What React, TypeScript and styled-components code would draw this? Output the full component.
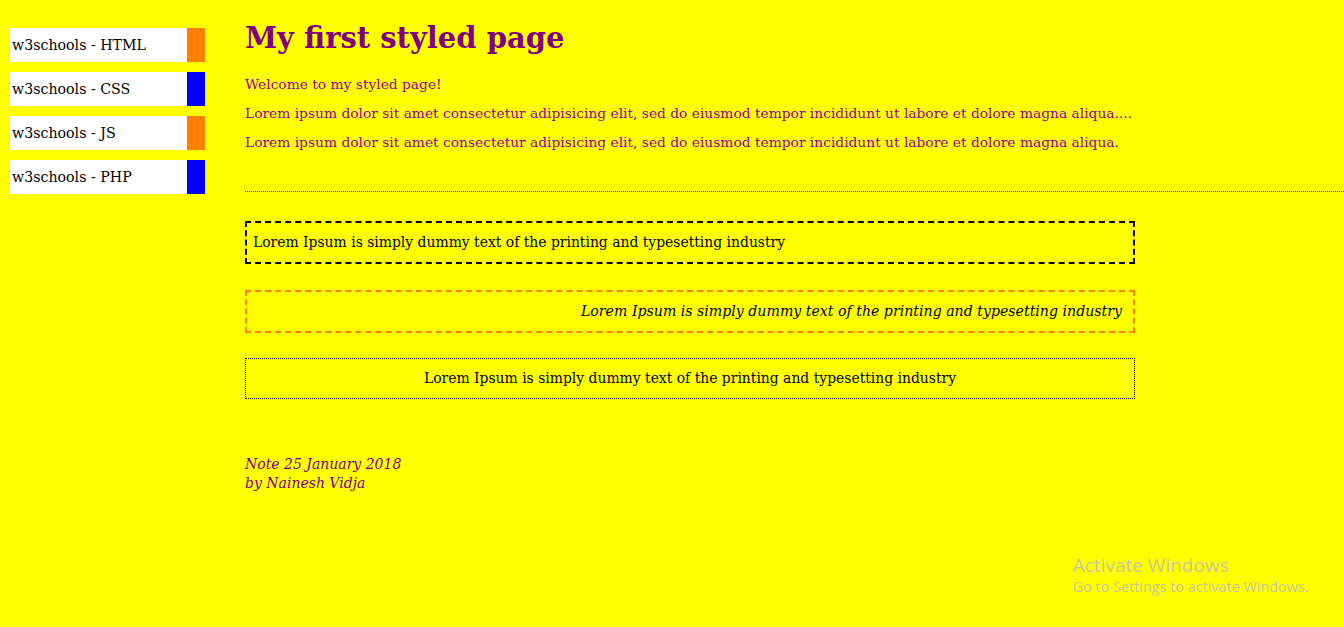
import React from 'react';
import styled, { createGlobalStyle } from 'styled-components';

const GlobalStyle = createGlobalStyle`
  html, body {
    margin: 0;
    padding: 0;
    background: #ffff00;
  }
  body {
    font-family: 'DejaVu Serif', Georgia, serif;
    color: #800080;
  }
`;

const links = [
  { label: 'w3schools - HTML', accent: '#ff8000' },
  { label: 'w3schools - CSS', accent: '#0000ff' },
  { label: 'w3schools - JS', accent: '#ff8000' },
  { label: 'w3schools - PHP', accent: '#0000ff' },
];

const boxes = [
  { variant: 'dashed' as const },
  { variant: 'italic' as const },
  { variant: 'dotted' as const },
];

const App: React.FC = () => {
  return (
    <>
      <GlobalStyle />
      <StyledPage>
        <StyledNav>
          {links.map((l) => (
            <StyledNavItem key={l.label} accent={l.accent}>
              {l.label}
            </StyledNavItem>
          ))}
        </StyledNav>
        <StyledMain>
          <StyledTitle>My first styled page</StyledTitle>
          <StyledPara>Welcome to my styled page!</StyledPara>
          <StyledPara>
            Lorem ipsum dolor sit amet consectetur adipisicing elit, sed do eiusmod tempor incididunt ut labore et dolore magna aliqua....
          </StyledPara>
          <StyledPara>
            Lorem ipsum dolor sit amet consectetur adipisicing elit, sed do eiusmod tempor incididunt ut labore et dolore magna aliqua.
          </StyledPara>
          <StyledRule />
          {boxes.map((b) => (
            <StyledBox key={b.variant} variant={b.variant}>
              Lorem Ipsum is simply dummy text of the printing and typesetting industry
            </StyledBox>
          ))}
          <StyledNote>
            Note 25 January 2018
            <br />
            by Nainesh Vidja
          </StyledNote>
        </StyledMain>
      </StyledPage>
      <StyledWatermark>
        <StyledWatermarkTitle>Activate Windows</StyledWatermarkTitle>
        <StyledWatermarkSub>Go to Settings to activate Windows.</StyledWatermarkSub>
      </StyledWatermark>
    </>
  );
};

const StyledPage = styled.div`
  display: flex;
  align-items: flex-start;
  min-height: 627px;
  width: 1344px;
  overflow: hidden;
`;

const StyledNav = styled.ul`
  list-style: none;
  margin: 28px 0 0 10px;
  padding: 0;
  width: 195px;
  flex-shrink: 0;
  display: flex;
  flex-direction: column;
  gap: 10px;
`;

const StyledNavItem = styled.li<{ accent: string }>`
  height: 34px;
  line-height: 34px;
  background: #ffffff;
  border-right: 18px solid ${(props) => props.accent};
  padding-left: 2px;
  color: #000000;
  font-size: 14.2px;
`;

const StyledMain = styled.main`
  margin-left: 40px;
  flex: 1;
  min-width: 0;
`;

const StyledTitle = styled.h1`
  margin: 18px 0 0 0;
  font-size: 29px;
  line-height: 40px;
  font-weight: 700;
  color: #800080;
`;

const StyledPara = styled.p`
  margin: 10px 0 0 0;
  font-size: 13.8px;
  line-height: 19px;
  color: #990099;

  &:first-of-type {
    margin-top: 17px;
  }
`;

const StyledRule = styled.hr`
  margin: 39px 0 29px 0;
  border: none;
  border-top: 1px dotted #800080;
  height: 0;
`;

const StyledBox = styled.div<{ variant: 'dashed' | 'italic' | 'dotted' }>`
  width: 890px;
  box-sizing: border-box;
  margin-bottom: ${(props) => (props.variant === 'dashed' ? '26px' : '25px')};
  color: #000000;
  font-size: ${(props) => (props.variant === 'italic' ? '14.15px' : '13.92px')};
  line-height: 19px;
  padding: ${(props) => (props.variant === 'dotted' ? '10px 6px' : '10px 11px 10px 6px')};
  border: ${(props) =>
    props.variant === 'dashed'
      ? '2px dashed #000000'
      : props.variant === 'italic'
      ? '2px dashed #ff8000'
      : '1px dotted #000080'};
  font-style: ${(props) => (props.variant === 'italic' ? 'italic' : 'normal')};
  text-align: ${(props) =>
    props.variant === 'italic' ? 'right' : props.variant === 'dotted' ? 'center' : 'left'};
`;

const StyledNote = styled.p`
  margin: 56px 0 0 0;
  font-size: 14px;
  line-height: 19px;
  font-style: italic;
  color: #800080;
`;

const StyledWatermark = styled.div`
  position: fixed;
  left: 1073px;
  top: 553px;
  font-family: 'Open Sans', 'Noto Sans', sans-serif;
  color: #c4c49a;
`;

const StyledWatermarkTitle = styled.div`
  font-size: 19px;
  line-height: 24px;
`;

const StyledWatermarkSub = styled.div`
  font-size: 14.4px;
  line-height: 20px;
`;

export default App;
